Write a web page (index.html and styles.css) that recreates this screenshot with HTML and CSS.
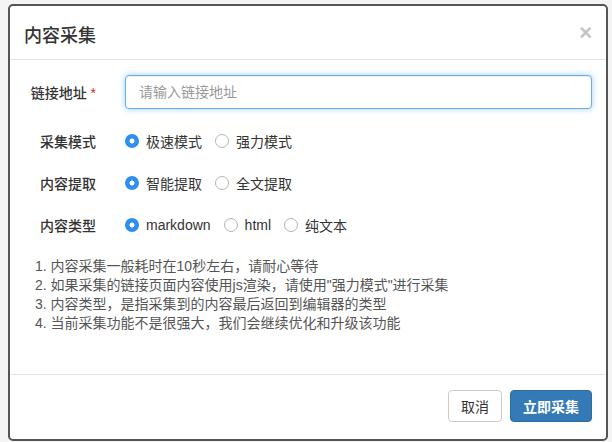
FILE: index.html
```html
<!DOCTYPE html>
<html lang="zh">
<head>
<meta charset="utf-8">
<link rel="stylesheet" href="styles.css">
</head>
<body>
<div class="modal">
  <div class="modal-header">
    <h4 class="title">内容采集</h4>
    <span class="close">×</span>
  </div>
  <div class="modal-body">
    <div class="row">
      <label class="label">链接地址 <span class="req">*</span></label>
      <input class="input" type="text" placeholder="请输入链接地址">
    </div>
    <div class="row">
      <label class="label">采集模式</label>
      <div class="radios">
        <span class="radio checked"></span><span class="opt">极速模式</span>
        <span class="radio"></span><span class="opt">强力模式</span>
      </div>
    </div>
    <div class="row">
      <label class="label">内容提取</label>
      <div class="radios">
        <span class="radio checked"></span><span class="opt">智能提取</span>
        <span class="radio"></span><span class="opt">全文提取</span>
      </div>
    </div>
    <div class="row">
      <label class="label">内容类型</label>
      <div class="radios">
        <span class="radio checked"></span><span class="opt">markdown</span>
        <span class="radio"></span><span class="opt">html</span>
        <span class="radio"></span><span class="opt">纯文本</span>
      </div>
    </div>
    <ol class="notes">
      <li>1. 内容采集一般耗时在10秒左右，请耐心等待</li>
      <li>2. 如果采集的链接页面内容使用js渲染，请使用"强力模式"进行采集</li>
      <li>3. 内容类型，是指采集到的内容最后返回到编辑器的类型</li>
      <li>4. 当前采集功能不是很强大，我们会继续优化和升级该功能</li>
    </ol>
  </div>
  <div class="modal-footer">
    <button class="btn">取消</button>
    <button class="btn primary">立即采集</button>
  </div>
</div>
</body>
</html>
```
FILE: styles.css
```css
* { box-sizing: border-box; }
html, body { margin: 0; padding: 0; }
body {
  width: 612px;
  height: 442px;
  background: #f4f4f4;
  font-family: "Liberation Sans", "Noto Sans CJK SC", sans-serif;
  font-size: 14px;
  color: #333;
  padding: 4px 4px 1px 8px;
}
.modal {
  width: 600px;
  height: 437px;
  background: #fff;
  border: 2px solid #555;
  border-radius: 5px;
  display: flex;
  flex-direction: column;
}
.modal-header {
  height: 54px;
  border-bottom: 1px solid #e5e5e5;
  display: flex;
  align-items: center;
  justify-content: space-between;
  padding: 0 14px 0 14px;
}
.title {
  margin: 0;
  font-size: 18px;
  font-weight: 500;
  color: #333;
  padding-top: 2px;
}
.close {
  font-size: 22px;
  font-weight: bold;
  color: #c4c4c4;
  line-height: 1;
}
.modal-body {
  flex: 1;
  padding: 15px 14px 0 14px;
}
.row {
  display: flex;
  align-items: center;
  height: 34px;
  margin-bottom: 8px;
}
.row:first-child { margin-bottom: 15px; }
.label {
  width: 72px;
  text-align: right;
  font-weight: 500;
  color: #333;
  margin-right: 29px;
  white-space: nowrap;
}
.req { color: #c9302c; }
.input {
  width: 467px;
  height: 34px;
  border: 1px solid #66afe9;
  border-radius: 4px;
  box-shadow: inset 0 1px 1px rgba(0,0,0,.075), 0 0 6px rgba(102,175,233,.6);
  padding: 6px 13px;
  font: inherit;
  color: #555;
  outline: none;
}
.input::placeholder { color: #999; }
.radios {
  display: flex;
  align-items: center;
}
.radio {
  width: 14px;
  height: 14px;
  border-radius: 50%;
  border: 1px solid #b5b5b5;
  background: #fff;
  margin-right: 7px;
  flex: none;
}
.radio.checked {
  border: none;
  background: radial-gradient(circle, #fff 0 2.2px, #2f8ef0 2.8px);
}
.opt {
  margin-right: 13px;
  color: #333;
}
.notes {
  list-style: none;
  margin: 15px 0 0 0;
  padding: 0 0 0 11px;
  font-size: 14px;
  line-height: 19px;
  color: #555;
}
.modal-footer {
  height: 65px;
  border-top: 1px solid #e5e5e5;
  display: flex;
  justify-content: flex-end;
  align-items: flex-start;
  gap: 8px;
  padding: 15px 14px 0 14px;
}
.btn {
  height: 32px;
  padding: 0 12px;
  font: inherit;
  border-radius: 4px;
  border: 1px solid #ccc;
  background: #fff;
  color: #333;
}
.btn.primary {
  background: #337ab7;
  border-color: #2e6da4;
  color: #fff;
  font-weight: 600;
}
```
